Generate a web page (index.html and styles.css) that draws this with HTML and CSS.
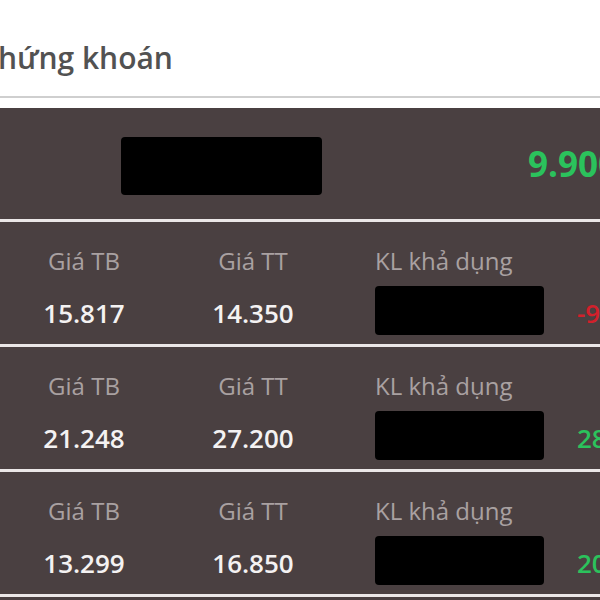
FILE: index.html
```html
<!DOCTYPE html>
<html lang="vi">
<head>
    <meta charset="UTF-8">
    <meta name="viewport" content="width=device-width, initial-scale=1.0">
    <title>Chứng khoán</title>
    <link rel="stylesheet" href="styles.css">
</head>
<body>

    <div class="header">
        <h1 class="title">Chứng khoán</h1>
    </div>

    <div class="portfolio">
        <div class="summary">
            <div class="mask mask-lg"></div>
            <div class="total up">9.900.000</div>
        </div>

        <div class="stock">
            <div class="label">Giá TB</div>
            <div class="label">Giá TT</div>
            <div class="label label-left">KL khả dụng</div>
            <div></div>
            <div class="value">15.817</div>
            <div class="value">14.350</div>
            <div class="cell-left"><div class="mask"></div></div>
            <div class="value value-left down">-9.562.000</div>
        </div>

        <div class="stock">
            <div class="label">Giá TB</div>
            <div class="label">Giá TT</div>
            <div class="label label-left">KL khả dụng</div>
            <div></div>
            <div class="value">21.248</div>
            <div class="value">27.200</div>
            <div class="cell-left"><div class="mask"></div></div>
            <div class="value value-left up">28.400.000</div>
        </div>

        <div class="stock">
            <div class="label">Giá TB</div>
            <div class="label">Giá TT</div>
            <div class="label label-left">KL khả dụng</div>
            <div></div>
            <div class="value">13.299</div>
            <div class="value">16.850</div>
            <div class="cell-left"><div class="mask"></div></div>
            <div class="value value-left up">20.500.000</div>
        </div>

        <div class="stock"></div>
    </div>

</body>
</html>
```

FILE: styles.css
```css
body {
    font-family: "Open Sans", "Noto Sans", sans-serif;
    margin: 0;
    background-color: white;
    width: 600px;
    height: 600px;
    overflow: hidden;
}
.header {
    height: 96px;
    border-bottom: 2px solid #cfcfcf;
    margin-bottom: 10px;
    white-space: nowrap;
}
.title {
    margin: 0 0 0 -21px;
    padding-top: 38px;
    font-size: 30px;
    line-height: 40px;
    font-weight: 600;
    color: #525252;
}
.portfolio {
    background-color: #4a4041;
}
.summary {
    display: flex;
    align-items: center;
    height: 111px;
    white-space: nowrap;
}
.mask {
    width: 169px;
    height: 49px;
    background-color: black;
    border-radius: 4px;
}
.mask-lg {
    flex-shrink: 0;
    width: 201px;
    height: 58px;
    margin-left: 121px;
    margin-top: 4px;
}
.total {
    margin-left: 206px;
    font-size: 35px;
    font-weight: 700;
}
.stock {
    display: grid;
    grid-template-columns: 168px 170px 239px 1fr;
    grid-template-rows: 32px 49px;
    row-gap: 9px;
    padding: 23px 0 9px;
    border-top: 3px solid #ebe7e7;
    white-space: nowrap;
    overflow: hidden;
}
.label {
    font-size: 24px;
    line-height: 32px;
    color: #a9a1a1;
    text-align: center;
}
.label-left {
    text-align: left;
    padding-left: 37px;
}
.value {
    font-size: 26px;
    line-height: 32px;
    font-weight: 600;
    color: #f4f2f2;
    text-align: center;
    padding-top: 11px;
}
.value-left {
    text-align: left;
}
.cell-left {
    padding-left: 37px;
}
.up {
    color: #2bc25c;
}
.down {
    color: #d2202b;
}
```
